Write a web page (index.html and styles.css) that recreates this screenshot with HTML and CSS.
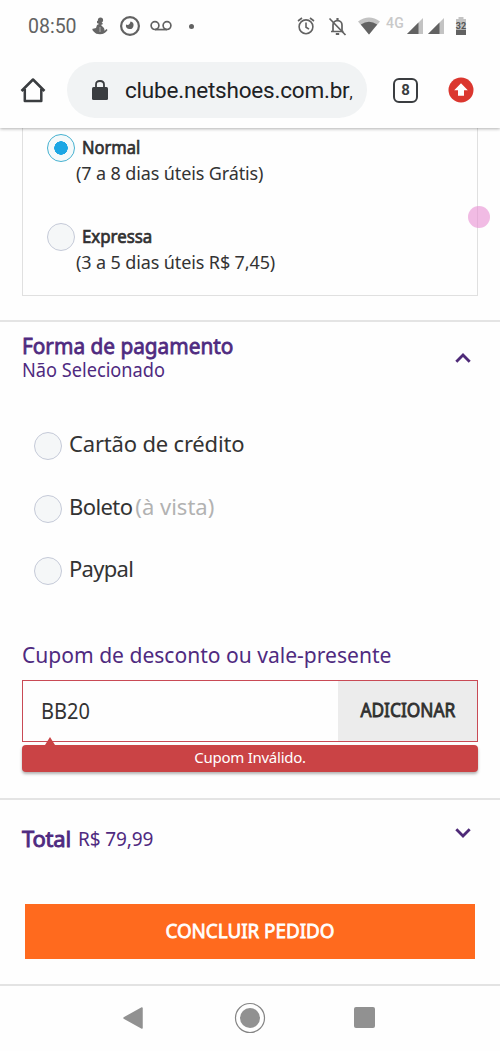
FILE: index.html
```html
<!DOCTYPE html>
<html lang="pt-BR">
<head>
<meta charset="utf-8">
<title>Netshoes</title>
<link rel="stylesheet" href="styles.css">
</head>
<body>
<header class="status">
  <span class="clock">08:50</span>
  <svg class="ic-debug" width="16" height="18" viewBox="0 0 16 18" fill="#666"><circle cx="8.500" cy="3" r="2.600"/><path d="M5 4l3-1 3 4-2 1 3 3 1 4-2 1.500H4L2 14 0 12l4-1 1-3 2-1-2-1z"/><path d="M1 12.500q3 4 7 4t7-4" fill="none" stroke="#666" stroke-width="1.500"/><path d="M8 10v5" stroke="#fff" stroke-width=".5"/></svg>
  <svg class="ic-eye" width="22" height="22" viewBox="0 0 22 22"><circle cx="11" cy="11" r="8.900" fill="none" stroke="#626262" stroke-width="2.200"/><path d="M11.500 6.500A3.800 3.800 0 1 1 7 9.500q3.500 1.500 4.500-3z" fill="#626262"/></svg>
  <svg class="ic-voice" width="22" height="12" viewBox="0 0 22 12" fill="none" stroke="#626262" stroke-width="1.700"><circle cx="5" cy="5.600" r="3.900"/><circle cx="17" cy="5.600" r="3.900"/><path d="M5 9.600h12"/></svg>
  <span class="dot"></span>
  <svg class="ic-alarm" width="18" height="18" viewBox="0 0 18 18" fill="none" stroke="#626262" stroke-width="1.600"><circle cx="9" cy="9.800" r="6.900"/><path d="M9 5.500v4.700l3 2M1 4l4-3M17 4l-4-3"/></svg>
  <svg class="ic-bell" width="19" height="19" viewBox="0 0 19 19" fill="none" stroke="#626262" stroke-width="1.700"><path d="M3 14.500h12.500M5 14V8q0-4 4.500-4.500Q14 4 14 8v6"/><path d="M9.500 1v3M7.800 17h3.400" stroke-width="2.200"/><path d="M1.500 1.500l16 16.500"/></svg>
  <svg class="ic-wifi" width="22" height="18" viewBox="0 0 22 18"><path d="M0 4.500Q11-3.500 22 4.500L11 17.500z" fill="#c3c3c3"/><path d="M2.800 7.600Q11 2 19.200 7.600L11 17.500z" fill="#626262"/></svg>
  <span class="net">4G</span>
  <svg class="ic-sig" width="16" height="16" viewBox="0 0 16 16"><path d="M0 16L16 0v16z" fill="#c3c3c3"/><path d="M0 16L11.500 4.500V16z" fill="#626262"/></svg>
  <svg class="ic-sig" width="16" height="16" viewBox="0 0 16 16"><path d="M0 16L16 0v16z" fill="#c3c3c3"/><path d="M0 16L11.500 4.500V16z" fill="#626262"/></svg>
  <svg class="ic-batt" width="12" height="18" viewBox="0 0 12 18"><path d="M3.500 0h5v2H11v10H1V2h2.500z" fill="#c3c3c3"/><path d="M1 12.500h10V18H1z" fill="#626262"/><text class="batt-text" x="6" y="12" text-anchor="middle">32</text></svg>
</header>
<div class="toolbar">
  <svg class="ic-home" width="26" height="26" viewBox="0 0 26 26" fill="none" stroke="#3a3d40" stroke-width="2.500" stroke-linejoin="round"><path d="M1.500 14L13 2.500 24.500 14M4.800 12v12h16.500V12"/></svg>
  <div class="url">
    <svg class="ic-lock" width="16" height="20" viewBox="0 0 16 20"><rect y="7" width="16" height="13" rx="1.500" fill="#3a3d40"/><path d="M4 8V4.700q0-3.700 4-3.700t4 3.700V8" fill="none" stroke="#3a3d40" stroke-width="1.800"/></svg>
    <span class="url-text">clube.netshoes.com.br<span class="url-end">,</span></span>
  </div>
  <span class="tabs">8</span>
  <svg class="ic-up" width="26" height="26" viewBox="0 0 26 26"><circle cx="13" cy="13" r="12.500" fill="#db372f"/><path d="M13 6.200l6.800 7H16v5.600h-6v-5.600H6.200z" fill="#fff"/></svg>
</div>
<main class="page">
  <section class="shipping">
    <div class="ship">
      <span class="radio on"></span>
      <div><div class="name n1">Normal</div><div class="detail">(7 a 8 dias úteis Grátis)</div></div>
    </div>
    <div class="ship">
      <span class="radio"></span>
      <div><div class="name n2">Expressa</div><div class="detail">(3 a 5 dias úteis R$ 7,45)</div></div>
    </div>
    <span class="touch"></span>
  </section>
  <section class="payment">
    <div class="pay-head">
      <div><h2 class="title">Forma de pagamento</h2><p class="sub">Não Selecionado</p></div>
      <svg class="chev" width="16" height="10" viewBox="0 0 16 10" fill="none" stroke="#4e2a78" stroke-width="2.800"><path d="M1.300 8.700L8 2l6.700 6.700"/></svg>
    </div>
    <div class="opt"><span class="radio"></span><span class="o1">Cartão de crédito</span></div>
    <div class="opt"><span class="radio"></span><span class="o2">Boleto</span><span class="muted">(à vista)</span></div>
    <div class="opt"><span class="radio"></span><span class="o3">Paypal</span></div>
    <h3 class="coupon-title">Cupom de desconto ou vale-presente</h3>
    <div class="coupon"><span class="code">BB20</span><span class="add"><span class="add-text">ADICIONAR</span></span></div>
    <div class="error"><span class="error-text">Cupom Inválido.</span></div>
  </section>
  <section class="total">
    <div class="total-row"><b class="tl">Total</b><span class="tv">R$ 79,99</span>
      <svg class="chev-d" width="16" height="10" viewBox="0 0 16 10" fill="none" stroke="#4e2a78" stroke-width="2.800"><path d="M1.300 1.300L8 8l6.700-6.700"/></svg>
    </div>
    <div class="cta"><span class="cta-text">CONCLUIR PEDIDO</span></div>
  </section>
</main>
<nav class="nav">
  <svg width="20" height="22" viewBox="0 0 20 22"><path d="M1 11L19 1v20z" fill="#919191" stroke="#919191" stroke-width="1.500" stroke-linejoin="round"/></svg>
  <svg width="32" height="32" viewBox="0 0 32 32"><circle cx="16" cy="16" r="14.500" fill="none" stroke="#858585" stroke-width="1.200"/><circle cx="16" cy="16" r="10" fill="#919191"/></svg>
  <span class="square"></span>
</nav>
</body>
</html>
```

FILE: styles.css
```css
* { box-sizing: border-box; }
body { margin: 0; width: 500px; height: 1051px; overflow: hidden; background: #fefefe; font-family: "Noto Sans", sans-serif; color: #333; display: flex; flex-direction: column; white-space: nowrap; }
h2, h3, p { margin: 0; font-weight: 400; }
svg { display: block; flex: none; }

.status { height: 52px; display: flex; align-items: center; font-family: Roboto, sans-serif; color: #626262; }
.clock { margin-left: 28px; width: 64px; font-size: 19.5px; }
.ic-eye { margin-left: 11px; }
.ic-voice { margin-left: 9px; }
.dot { width: 5px; height: 5px; border-radius: 50%; background: #626262; margin-left: 17px; }
.ic-alarm { margin-left: 103px; }
.ic-bell { margin-left: 13px; }
.ic-wifi { margin-left: 11px; }
.net { margin-left: 6px; width: 21px; font-size: 14px; font-weight: 500; color: #c9c9c9; margin-bottom: 7px; letter-spacing: .4px; }
.ic-sig { margin: 0 5px 0 0; }
.ic-batt { margin-left: 6px; }
.batt-text { font: bold 9px Roboto, sans-serif; fill: #555; }

.toolbar { height: 76px; display: flex; align-items: center; position: relative; z-index: 1; background: #fefefe; box-shadow: 0 1px 3px rgba(0,0,0,.3); clip-path: inset(0 0 -8px 0); }
.ic-home { margin-left: 20px; }
.url { margin-left: 21px; width: 300px; height: 56px; border-radius: 28px; background: #f1f3f4; display: flex; align-items: center; }
.ic-lock { margin-left: 25px; }
.url-text { margin-left: 17px; font: 22.5px Roboto, sans-serif; color: #202124; letter-spacing: -.2px; }
.url-end { font-size: 16px; }
.tabs { margin-left: 26px; width: 25px; height: 25px; border: 2.5px solid #3a3d40; border-radius: 6px; font: bold 15px/20px Roboto, sans-serif; text-align: center; color: #3a3d40; }
.ic-up { margin-left: 30px; }

.page { height: 856px; }
.radio { flex: none; width: 28px; height: 28px; border-radius: 50%; border: 1.5px solid #c5cad8; background: #f5f7f8; }
.radio.on { border-color: #45b1d0; background: radial-gradient(circle, #1ca6e4 6.500px, #f5f9fa 7px); }
.shipping { position: relative; margin: 0 22px; height: 168px; border: 1.5px solid #e0e0e0; border-top: 0; padding: 6px 0 0 24px; }
.ship { display: flex; height: 89px; }
.name { margin-left: 7px; font-size: 18px; line-height: 26px; color: #303030; -webkit-text-stroke: .7px #303030; width: max-content; transform-origin: left; }
.n1 { transform: scaleX(.915); }
.n2 { transform: scaleX(.935); }
.detail { margin-left: 1px; font-size: 18px; line-height: 26px; letter-spacing: -.12px; }
.touch { position: absolute; right: -13px; top: 78px; width: 22px; height: 22px; border-radius: 50%; background: rgba(232,142,210,.6); }

.payment { margin-top: 24px; height: 478px; border-top: 2px solid #e4e4e4; padding: 10px 22px 0; color: #333; }
.pay-head { display: flex; justify-content: space-between; color: #4f2a80; height: 83px; }
.title { font-size: 22px; line-height: 27px; width: max-content; transform: scaleX(.945); transform-origin: left; -webkit-text-stroke: .8px #4f2a80; }
.sub { font-size: 19px; line-height: 22px; width: max-content; transform: scaleX(.957); transform-origin: left; }
.chev { margin: 21px 7px 0 0; }
.opt { display: flex; align-items: center; height: 62.5px; padding-left: 12px; font-size: 22px; line-height: 30px; padding-bottom: 6px; }
.opt .radio { margin-right: 7px; position: relative; top: 3px; }
.o1 { letter-spacing: -.18px; }
.o2 { letter-spacing: -.6px; }
.o3 { letter-spacing: -.7px; }
.muted { color: #b2b2b2; margin-left: 3px; }
.coupon-title { margin-top: 36px; font-size: 22px; line-height: 30px; color: #4f2a80; width: max-content; transform: scaleX(.957); transform-origin: left; }
.coupon { margin-top: 11px; height: 62px; border: 1.5px solid #c94a55; display: flex; justify-content: space-between; align-items: center; }
.code { margin-left: 18px; font-size: 22px; transform: scaleX(.91); transform-origin: left; margin-top: -2px; }
.add { width: 139px; height: 100%; background: #ececec; display: flex; align-items: center; justify-content: center; font-size: 20px; -webkit-text-stroke: .9px #303030; color: #303030; }
.add-text { transform: scaleX(.865); margin-top: -3px; }
.error { position: relative; margin-top: 3px; height: 27px; border-radius: 4px; background: #ca4345; color: #fff; display: flex; align-items: center; justify-content: center; font-size: 15px; letter-spacing: -.25px; box-shadow: 0 2px 3px rgba(0,0,0,.3); }
.error::before { content: ""; position: absolute; left: 23px; top: -8px; border: 5px solid transparent; border-top: 0; border-bottom: 8px solid #ca4345; }
.error-text { margin-top: -2px; }

.total { height: 186px; border-top: 2px solid #e4e4e4; padding: 0 25px; color: #4f2a80; }
.total-row { display: flex; align-items: center; height: 76px; margin-left: -3px; }
.tl { font-size: 22px; font-weight: 400; letter-spacing: -.2px; -webkit-text-stroke: .9px #4f2a80; }
.tv { margin-left: 7px; margin-top: 2px; font-size: 19px; letter-spacing: -.1px; }
.chev-d { margin: -11px 4px 0 auto; }
.cta { margin-top: 28px; height: 55px; background: #ff6a1e; color: #fff; display: flex; align-items: center; justify-content: center; font-size: 20px; -webkit-text-stroke: .8px #fff; }
.cta-text { transform: scaleX(.94); margin-top: -2px; }
.nav { height: 67px; border-top: 2px solid #e3e3e3; position: relative; display: grid; grid-template-columns: 20px 32px 21px; column-gap: 91px; padding: 0 0 2px 123px; align-items: center; }
.square { width: 21px; height: 21px; border-radius: 2px; background: #919191; margin-left: -3px; }
```
